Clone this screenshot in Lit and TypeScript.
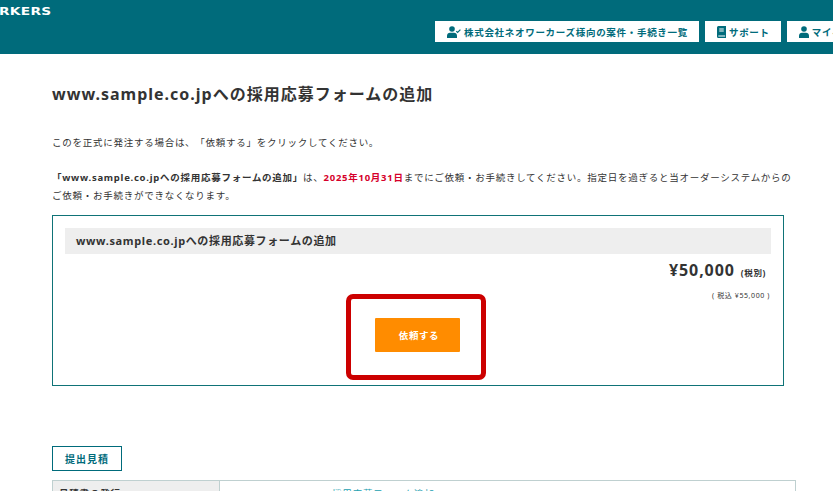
import { LitElement, html, css, svg } from "lit";
import { customElement } from "lit/decorators.js";

const userCheck = svg`<svg class="ic" viewBox="0 0 14 12" width="14" height="12"><circle cx="5" cy="3" r="2.8" fill="currentColor"/><path d="M0 12V9.6C0 7.9 1.3 6.8 3 6.8h4c1.7 0 3 1.1 3 2.8V12z" fill="currentColor"/><path d="M9.3 5.2l1.3 1.3L13.4 3.6" fill="none" stroke="currentColor" stroke-width="1.2"/></svg>`;
const book = svg`<svg class="ic" viewBox="0 0 10 12" width="9" height="12" preserveAspectRatio="none"><path fill-rule="evenodd" d="M1.5 0H10v12H1.5A1.5 1.5 0 0 1 0 10.5v-9A1.5 1.5 0 0 1 1.5 0zM2.5 2.5v1h5v-1zM2.5 4.5v1h5v-1zM1.5 9.6v1H9v-1z" fill="currentColor"/></svg>`;
const user = svg`<svg class="ic" viewBox="0 0 10 12" width="10" height="12"><circle cx="5" cy="3" r="2.8" fill="currentColor"/><path d="M0 12V9.6C0 7.9 1.3 6.8 3 6.8h4c1.7 0 3 1.1 3 2.8V12z" fill="currentColor"/></svg>`;

@customElement("app-root")
export class AppRoot extends LitElement {
  static styles = css`
    :host {
      display: block;
      width: 833px;
      height: 491px;
      overflow: hidden;
      background: #fff;
      color: #333;
      font-family: "Noto Sans", "Noto Sans CJK JP", sans-serif;
      text-spacing-trim: space-all;
      position: relative;
    }
    .top {
      height: 54px;
      background: #006b7b;
      display: flex;
      flex-direction: column;
      overflow: hidden;
    }
    .logo {
      height: 21px;
      color: #fff;
      font: 700 11px/23px "DejaVu Sans", sans-serif;
      letter-spacing: 0.2px;
      margin-left: -1px;
      transform: scaleX(1.25);
      transform-origin: left;
    }
    .nav {
      display: flex;
      gap: 6px;
      padding-left: 435px;
    }
    .nav a {
      flex: none;
      height: 21px;
      background: #fff;
      color: #006b7b;
      font-size: 9.5px;
      font-weight: 700;
      letter-spacing: 0.7px;
      display: flex;
      align-items: center;
      gap: 3px;
      padding: 0 11px 0 12px;
      white-space: nowrap;
    }
    main {
      padding: 28px 0 0 52px;
      width: 744px;
    }
    h1 {
      margin: 0;
      font-size: 16px;
      line-height: 24px;
      font-weight: 700;
      letter-spacing: 1px;
      color: #333;
    }
    p {
      margin: 0;
      font-size: 9.5px;
      line-height: 17.5px;
      letter-spacing: 0.74px;
      font-weight: 400;
      color: #333;
      width: 744px;
    }
    .p1 { margin-top: 28px; }
    .p2 { margin-top: 17.5px; }
    strong { font-weight: 700; }
    .red { color: #d6002a; font-weight: 700; }
    .box {
      margin-top: 11px;
      width: 732px;
      height: 171px;
      box-sizing: border-box;
      border: 1px solid #0f7377;
      padding: 12px 12px 0 12px;
    }
    .box h2 {
      margin: 0;
      height: 26px;
      background: #eee;
      padding-left: 11px;
      font-size: 11px;
      line-height: 26px;
      font-weight: 700;
      letter-spacing: 0.64px;
      color: #333;
    }
    .price {
      margin-top: 5px;
      text-align: right;
      padding-right: 5px;
      font-size: 16px;
      line-height: 22px;
      font-weight: 700;
      letter-spacing: 0.9px;
    }
    .price small { font-size: 8.5px; font-weight: 700; letter-spacing: 0.6px; margin-left: 1px; }
    .tax {
      margin-top: 6px;
      text-align: right;
      padding-right: 1px;
      font-size: 7px;
      line-height: 12px;
      letter-spacing: 0.6px;
    }
    .cta { display: flex; justify-content: center; margin-top: 16px; padding-right: 1px; }
    .cta a {
      width: 85px;
      height: 34px;
      box-sizing: border-box;
      padding-left: 3px;
      background: #ff8c00;
      border-radius: 1px;
      color: #fff;
      font-size: 9.5px;
      font-weight: 700;
      letter-spacing: 0.6px;
      display: flex;
      align-items: center;
      justify-content: center;
    }
    .tag {
      margin-top: 60px;
      width: 70px;
      height: 25px;
      box-sizing: border-box;
      border: 1px solid #006b7b;
      color: #006b7b;
      font-size: 10px;
      font-weight: 700;
      letter-spacing: 1px;
      display: flex;
      align-items: center;
      justify-content: center;
    }
    .table {
      margin-top: 9px;
      box-sizing: border-box;
      width: 744px;
      height: 40px;
      border: 1px solid #bfd0d0;
      display: grid;
      grid-template-columns: 167px 1fr;
      font-size: 9.5px;
      letter-spacing: 0.8px;
    }
    .th {
      background: #eee;
      border-right: 1px solid #bfd0d0;
      padding: 6px 0 0 6px;
      font-weight: 700;
      line-height: 14px;
    }
    .td { padding: 6px 0 0 112px; line-height: 14px; color: #1aa0b0; }
    .mark {
      position: absolute;
      left: 346px;
      top: 294px;
      width: 140px;
      height: 86px;
      box-sizing: border-box;
      border: 5px solid #cc0000;
      border-radius: 7px;
      pointer-events: none;
    }
  `;

  render() {
    return html`
      <div class="top">
        <div class="logo">RKERS</div>
        <nav class="nav">
          <a>${userCheck}株式会社ネオワーカーズ様向の案件・手続き一覧</a>
          <a>${book}サポート</a>
          <a>${user}マイページ</a>
        </nav>
      </div>
      <main>
        <h1>www.sample.co.jpへの採用応募フォームの追加</h1>
        <p class="p1">このを正式に発注する場合は、「依頼する」をクリックしてください。</p>
        <p class="p2"><strong>「www.sample.co.jpへの採用応募フォームの追加」</strong>は、<span class="red">2025年10月31日</span>までにご依頼・お手続きしてください。指定日を過ぎると当オーダーシステムからのご依頼・お手続きができなくなります。</p>
        <section class="box">
          <h2>www.sample.co.jpへの採用応募フォームの追加</h2>
          <div class="price">¥50,000 <small>(税別)</small></div>
          <div class="tax">( 税込 ¥55,000 )</div>
          <div class="cta"><a>依頼する</a></div>
        </section>
        <div class="tag">提出見積</div>
        <div class="table">
          <div class="th">見積書の発行</div>
          <div class="td">採用応募フォーム追加</div>
        </div>
      </main>
      <div class="mark"></div>
    `;
  }
}
